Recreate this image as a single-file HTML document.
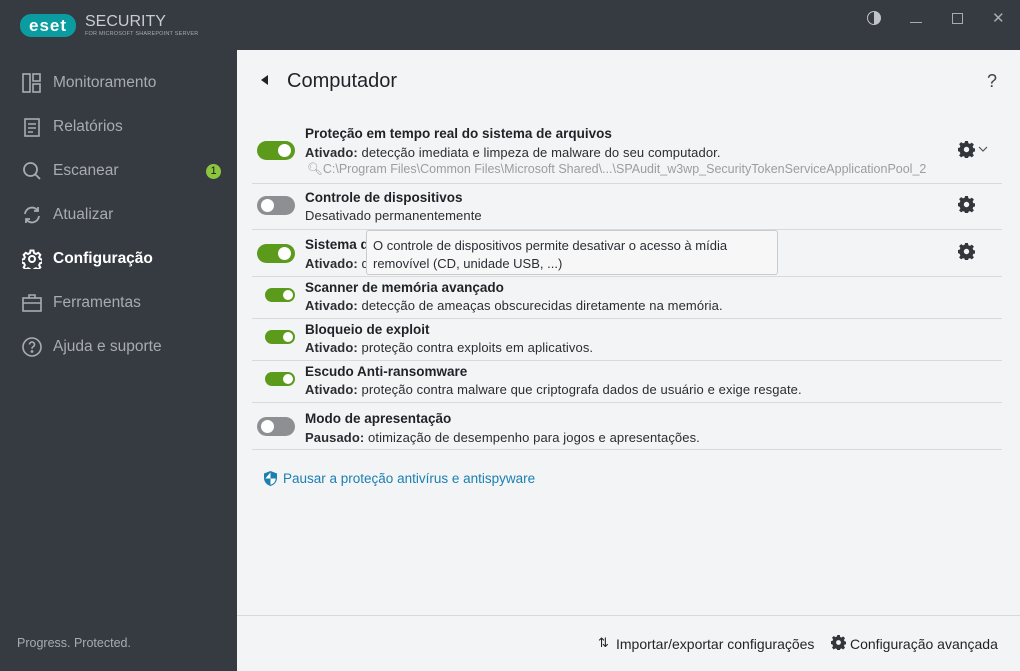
<!DOCTYPE html>
<html><head><meta charset="utf-8"><style>
*{margin:0;padding:0;box-sizing:border-box}
body{width:1020px;height:671px;background:#f3f4f6;font-family:"Liberation Sans",sans-serif;position:relative;overflow:hidden;color:#1f2328}
.top{position:absolute;left:0;top:0;width:1020px;height:50px;background:#363a41}
.side{position:absolute;left:0;top:50px;width:237px;height:621px;background:#363a41}
.nav{position:absolute;left:22px;font-size:15.5px;color:#a8acb2;display:flex;align-items:center}
.nav svg{width:20px;height:20px;margin-right:11px}
.a{position:absolute;font-size:14px}
.t{position:absolute;left:305px;font-size:13.5px;font-weight:bold;color:#1f2328}
.d{position:absolute;left:305px;font-size:13px;color:#2a2e33;letter-spacing:.1px}
.d b{font-weight:bold}
.sep{position:absolute;left:252px;width:750px;height:1px;background:#d8dadd}
.tg{position:absolute;border-radius:10px;background:#5b9a1b}
.tg i{position:absolute;background:#fff;border-radius:50%}
.off{background:#8d8f92}
.gear{position:absolute;left:958px;width:17px;height:17px}
</style></head><body>
<svg width="0" height="0" style="position:absolute"><defs><symbol id="g" viewBox="0 0 20 20"><path fill-rule="evenodd" fill="#33363b" d="M8.3 0h3.4l.5 2.6 1.9.8 2.2-1.5 2.4 2.4-1.5 2.2.8 1.9 2.6.5v3.4l-2.6.5-.8 1.9 1.5 2.2-2.4 2.4-2.2-1.5-1.9.8-.5 2.6H8.3l-.5-2.6-1.9-.8-2.2 1.5-2.4-2.4 1.5-2.2-.8-1.9L-.6 11.7V8.3l2.6-.5.8-1.9-1.5-2.2 2.4-2.4 2.2 1.5 1.9-.8zM10 6.8a3.2 3.2 0 1 0 0 6.4 3.2 3.2 0 0 0 0-6.4z"/></symbol></defs></svg>
<div class="top"></div>
<div class="side"></div>
<div style="position:absolute;left:20px;top:14px;width:56px;height:23px;background:#0a9ca0;border-radius:11px;color:#fff;font-weight:bold;font-size:17px;line-height:23px;text-align:center;letter-spacing:1px">eset</div>
<div style="position:absolute;left:85px;top:13px;color:#c8ccd0;font-size:16px">SECURITY</div>
<div style="position:absolute;left:85px;top:31px;color:#a8acb2;font-size:5.5px;letter-spacing:.2px">FOR MICROSOFT SHAREPOINT SERVER</div>
<div style="position:absolute;left:867px;top:11px;width:14px;height:14px;border:1.5px solid #c0c3c7;border-radius:50%;background:linear-gradient(90deg,#363a41 50%,#c0c3c7 50%)"></div>
<div style="position:absolute;left:910px;top:22px;width:12px;height:1px;background:#a8acb2"></div>
<div style="position:absolute;left:952px;top:13px;width:11px;height:11px;border:1px solid #a8acb2"></div>
<div style="position:absolute;left:992px;top:9px;color:#a8acb2;font-size:15px">✕</div>
<div class="nav" style="top:73px"><svg viewBox="0 0 20 20" fill="none" stroke="#a8acb2" stroke-width="1.6"><rect x="1" y="1" width="7" height="18"/><rect x="11" y="1" width="7" height="7"/><rect x="11" y="11" width="7" height="8"/></svg>Monitoramento</div>
<div class="nav" style="top:117px"><svg viewBox="0 0 20 20" fill="none" stroke="#a8acb2" stroke-width="1.6"><rect x="3" y="2" width="14" height="17"/><path d="M6 7h8M6 11h8M6 15h5"/></svg>Relatórios</div>
<div class="nav" style="top:161px"><svg viewBox="0 0 20 20" fill="none" stroke="#a8acb2" stroke-width="1.8"><circle cx="8.5" cy="8.5" r="6.5"/><path d="M13 13l5 5"/></svg>Escanear</div>
<div style="position:absolute;left:206px;top:164px;width:15px;height:15px;border-radius:50%;background:#8cc63f;color:#1b1b1b;font-size:11px;text-align:center;line-height:15px">1</div>
<div class="nav" style="top:205px"><svg viewBox="0 0 20 20" fill="none" stroke="#a8acb2" stroke-width="1.8"><path d="M3 9a7 7 0 0 1 13-3M17 11a7 7 0 0 1-13 3"/><path d="M16 2v4h-4M4 18v-4h4"/></svg>Atualizar</div>
<div class="nav" style="top:249px;color:#fff;font-weight:bold"><svg viewBox="0 0 20 20" fill="none" stroke="#fff" stroke-width="2"><circle cx="10" cy="10" r="3"/><path d="M8.5 1.5h3l.5 2.5 2 1 2.3-1.2 2 2-1.2 2.3 1 2 2.4.5v3l-2.4.5-1 2 1.2 2.3-2 2-2.3-1.2-2 1-.5 2.4h-3l-.5-2.4-2-1-2.3 1.2-2-2 1.2-2.3-1-2-2.4-.5v-3l2.4-.5 1-2-1.2-2.3 2-2 2.3 1.2 2-1z"/></svg>Configuração</div>
<div class="nav" style="top:293px"><svg viewBox="0 0 20 20" fill="none" stroke="#a8acb2" stroke-width="1.6"><rect x="1" y="5" width="18" height="13"/><path d="M7 5V2h6v3M1 10h18"/></svg>Ferramentas</div>
<div class="nav" style="top:337px"><svg viewBox="0 0 20 20" fill="none" stroke="#a8acb2" stroke-width="1.6"><circle cx="10" cy="10" r="9"/><path d="M7.5 7.5a2.5 2.5 0 1 1 3.5 2.3c-.8.4-1 1-1 2"/><circle cx="10" cy="14.5" r=".6" fill="#a8acb2"/></svg>Ajuda e suporte</div>
<div style="position:absolute;left:17px;top:636px;font-size:12.5px;color:#a8acb2">Progress. Protected.</div>
<div style="position:absolute;left:261px;top:75px;width:0;height:0;border-top:5px solid transparent;border-bottom:5px solid transparent;border-right:7px solid #1f2328"></div>
<div class="a" style="left:287px;top:70px;font-size:20px">Computador</div>
<div class="a" style="left:987px;top:71px;font-size:18px;color:#444">?</div>
<div class="tg" style="left:257px;top:141px;width:38px;height:19px"><i style="left:21px;top:3px;width:13px;height:13px"></i></div>
<div class="t" style="top:126px">Proteção em tempo real do sistema de arquivos</div>
<div class="d" style="top:145px"><b>Ativado:</b> detecção imediata e limpeza de malware do seu computador.</div>
<div class="d" style="top:162px;left:307px;color:#9a9da2;font-size:12.5px;letter-spacing:0">🔍︎C:\Program Files\Common Files\Microsoft Shared\...\SPAudit_w3wp_SecurityTokenServiceApplicationPool_2</div>
<svg class="gear" style="top:141px"><use href="#g"/></svg>
<svg style="position:absolute;left:978px;top:146px" width="10" height="7" viewBox="0 0 10 7"><path d="M1 1l4 4 4-4" fill="none" stroke="#555" stroke-width="1.2"/></svg>
<div class="sep" style="top:183px"></div>
<div class="tg off" style="left:257px;top:196px;width:38px;height:19px"><i style="left:4px;top:3px;width:13px;height:13px"></i></div>
<div class="t" style="top:190px">Controle de dispositivos</div>
<div class="d" style="top:208px">Desativado permanentemente</div>
<svg class="gear" style="top:196px"><use href="#g"/></svg>
<div class="sep" style="top:229px"></div>
<div class="tg" style="left:257px;top:244px;width:38px;height:19px"><i style="left:21px;top:3px;width:13px;height:13px"></i></div>
<div class="t" style="top:237px">Sistema d</div>
<div class="d" style="top:256px"><b>Ativado:</b> d</div>
<svg class="gear" style="top:243px"><use href="#g"/></svg>
<div style="position:absolute;left:366px;top:230px;width:412px;height:45px;background:#f7f7f8;border:1px solid #c9cbce;border-radius:3px;font-size:13px;color:#2a2e33;padding:6px 0 0 6px;line-height:18px">O controle de dispositivos permite desativar o acesso à mídia<br>removível (CD, unidade USB, ...)</div>
<div class="sep" style="top:276px"></div>
<div class="tg" style="left:265px;top:288px;width:30px;height:14px"><i style="left:18px;top:2px;width:10px;height:10px"></i></div>
<div class="t" style="top:280px">Scanner de memória avançado</div>
<div class="d" style="top:298px"><b>Ativado:</b> detecção de ameaças obscurecidas diretamente na memória.</div>
<div class="sep" style="top:318px"></div>
<div class="tg" style="left:265px;top:330px;width:30px;height:14px"><i style="left:18px;top:2px;width:10px;height:10px"></i></div>
<div class="t" style="top:322px">Bloqueio de exploit</div>
<div class="d" style="top:340px"><b>Ativado:</b> proteção contra exploits em aplicativos.</div>
<div class="sep" style="top:360px"></div>
<div class="tg" style="left:265px;top:372px;width:30px;height:14px"><i style="left:18px;top:2px;width:10px;height:10px"></i></div>
<div class="t" style="top:364px">Escudo Anti-ransomware</div>
<div class="d" style="top:382px"><b>Ativado:</b> proteção contra malware que criptografa dados de usuário e exige resgate.</div>
<div class="sep" style="top:402px"></div>
<div class="tg off" style="left:257px;top:417px;width:38px;height:19px"><i style="left:4px;top:3px;width:13px;height:13px"></i></div>
<div class="t" style="top:411px">Modo de apresentação</div>
<div class="d" style="top:430px"><b>Pausado:</b> otimização de desempenho para jogos e apresentações.</div>
<div class="sep" style="top:449px"></div>
<svg style="position:absolute;left:264px;top:471px" width="13" height="15" viewBox="0 0 13 15"><path d="M6.5 0L0 2.5v4.5c0 4 3 7 6.5 8 3.5-1 6.5-4 6.5-8V2.5z" fill="#1b7fb0"/><path d="M6.5 1.5v6H1.3M6.5 7.5h5.2v.5c-.5 3-2.5 5-5.2 5.8z" fill="#fff"/></svg>
<div class="a" style="left:283px;top:471px;font-size:13.5px;color:#1b7fb0">Pausar a proteção antivírus e antispyware</div>
<div class="sep" style="top:615px;left:237px;width:783px"></div>
<div class="a" style="left:598px;top:635px;font-size:13px">⇅</div>
<div class="a" style="left:616px;top:636px;font-size:14px">Importar/exportar configurações</div>
<svg style="position:absolute;left:831px;top:635px" width="15" height="15"><use href="#g"/></svg>
<div class="a" style="left:850px;top:636px;font-size:14px">Configuração avançada</div>
</body></html>
